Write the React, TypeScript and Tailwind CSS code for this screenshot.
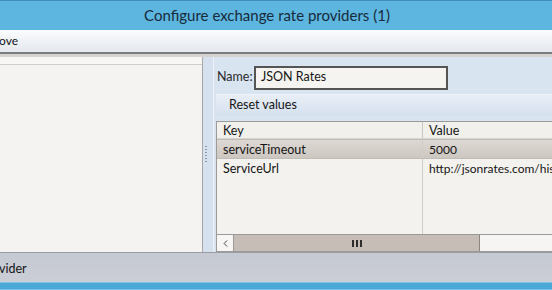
import { ChevronLeft } from "lucide-react";

const rows = [
	{ key: "serviceTimeout", value: "5000", selected: true },
	{ key: "ServiceUrl", value: "http://jsonrates.com/his", selected: false },
];

const App = () => {
	return (
		<div
			className="w-[552px] h-[290px] flex flex-col overflow-hidden bg-[#d9e4f1] text-[12px] text-[#141414]"
			style={{ fontFamily: "Lato, 'Liberation Sans', sans-serif" }}
		>
			{/* title bar */}
			<div className="h-[30px] shrink-0 bg-[#5cb6df] border-t border-[#3f8fb8] flex items-center justify-center">
				<span className="text-[15px] text-[#182a3a] pr-[18px]">Configure exchange rate providers (1)</span>
			</div>

			{/* toolbar */}
			<div className="h-[24px] shrink-0 bg-gradient-to-b from-[#fbfcfe] to-[#e4e8ef] border-b-2 border-[#7b7d82] flex items-center">
				<span className="-ml-[1px]">ove</span>
			</div>

			{/* main */}
			<div className="flex-1 flex min-h-0 border-t-[3px] border-[#d7d4d0]">
				<div className="w-[203px] shrink-0 flex flex-col bg-[#f4f3f1] border-r border-[#a9a7a5]">
					<div className="h-[8px] border-b border-[#cfcdca] bg-[#f7f6f4]" />
				</div>

				<div className="w-[10px] shrink-0 bg-[#d6e1ef] flex flex-col items-center justify-start pt-[89px]">
					<div className="flex flex-col gap-[2px] -ml-[5px]">
						{Array.from({ length: 6 }).map((_, i) => (
							<div key={i} className="w-[2px] h-[1px] bg-[#8e98a6]" />
						))}
					</div>
				</div>

				<div className="flex-1 flex flex-col pl-[2px] border-l border-[#eef2f8]">
					<div className="flex items-center pt-[7px] h-[34px]">
						<span className="ml-[1px] w-[37px] text-[12.5px] text-[#2a2a2a]">Name:</span>
						<div className="w-[194px] h-[24px] border-2 border-[#555] bg-[#f6f4f0] flex items-center px-[5px] text-[12.5px]">
							JSON Rates
						</div>
					</div>

					<div className="mt-[3px] h-[22px] bg-gradient-to-b from-[#e8eef6] to-[#d5e0ee] border-t border-[#eef2f8] flex items-center pl-[13px] text-[12.5px]">
						Reset values
					</div>

					<div className="mt-[5px] flex-1 bg-[#f4f2ef] border border-[#9c9a98] flex flex-col text-[12.5px]">
						<div className="h-[17px] flex border-b border-[#d8d5d1] bg-[#f2f0ed]">
							<div className="w-[206px] pl-[6px] border-r border-[#c9c6c2] leading-[17px]">Key</div>
							<div className="flex-1 pl-[6px] leading-[17px]">Value</div>
						</div>
						{rows.map((r) => (
							<div
								key={r.key}
								className={`h-[20px] flex ${
									r.selected ? "bg-gradient-to-b from-[#ddd8d3] to-[#cdc7c1] border-y border-[#c2bcb6]" : ""
								}`}
							>
								<div className="w-[206px] pl-[6px] border-r border-[#d0cdc9] leading-[19px] whitespace-nowrap">{r.key}</div>
								<div className="flex-1 pl-[6px] leading-[19px] whitespace-nowrap text-[12px]">{r.value}</div>
							</div>
						))}
						<div className="flex-1 flex">
							<div className="w-[206px] border-r border-[#d0cdc9]" />
							<div className="flex-1" />
						</div>
						<div className="h-[17px] flex border-t border-[#9c9a98] bg-[#f6f5f3]">
							<div className="w-[17px] flex items-center justify-center border-r border-[#9c9a98] bg-[#f7f6f4]">
								<ChevronLeft size={11} strokeWidth={2} className="text-[#333]" />
							</div>
							<div className="w-[246px] bg-[#c6bdb6] border-r border-[#8d8680] flex items-center justify-center">
								<div className="flex gap-[2px]">
									<div className="w-[2px] h-[7px] bg-[#2e2e2e]" />
									<div className="w-[2px] h-[7px] bg-[#2e2e2e]" />
									<div className="w-[2px] h-[7px] bg-[#2e2e2e]" />
								</div>
							</div>
							<div className="flex-1" />
						</div>
					</div>
				</div>
			</div>

			{/* bottom bar */}
			<div className="h-[30px] shrink-0 bg-gradient-to-b from-[#c5c9d2] to-[#cbced6] border-t border-[#9a9ca2] flex items-center">
				<span className="-ml-[1px] pt-[3px] text-[12.5px]">vider</span>
			</div>
			<div className="h-[8px] shrink-0 bg-[#4ba7d5] border-t border-[#7cc3e6] border-b border-[#1f5d80]" />
		</div>
	);
};

export default App;
